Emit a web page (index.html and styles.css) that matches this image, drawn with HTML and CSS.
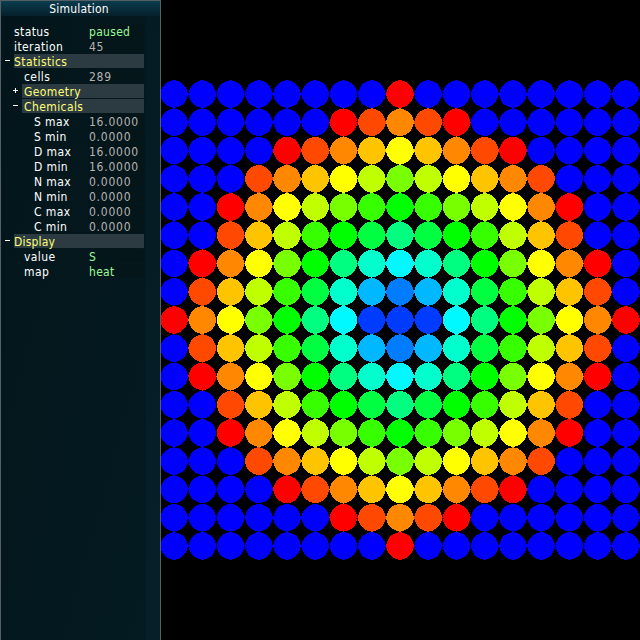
FILE: index.html
```
<!DOCTYPE html>
<html lang="en">
<head>
<meta charset="utf-8">
<title>Simulation</title>
<link rel="stylesheet" href="styles.css">
</head>
<body>
<main class="app">
  <aside class="panel">
    <h1 class="title">Simulation</h1>
    <div class="rows">
      <div class="row"><span class="name">status</span><span class="value live">paused</span></div>
      <div class="row"><span class="name">iteration</span><span class="value">45</span></div>
      <div class="row group"><i class="sign minus"></i><span class="head">Statistics</span></div>
      <div class="row l1"><span class="name">cells</span><span class="value">289</span></div>
      <div class="row group l1"><i class="sign plus"></i><span class="head">Geometry</span></div>
      <div class="row group l1"><i class="sign minus"></i><span class="head">Chemicals</span></div>
      <div class="row l2"><span class="name">S max</span><span class="value">16.0000</span></div>
      <div class="row l2"><span class="name">S min</span><span class="value">0.0000</span></div>
      <div class="row l2"><span class="name">D max</span><span class="value">16.0000</span></div>
      <div class="row l2"><span class="name">D min</span><span class="value">16.0000</span></div>
      <div class="row l2"><span class="name">N max</span><span class="value">0.0000</span></div>
      <div class="row l2"><span class="name">N min</span><span class="value">0.0000</span></div>
      <div class="row l2"><span class="name">C max</span><span class="value">0.0000</span></div>
      <div class="row l2"><span class="name">C min</span><span class="value">0.0000</span></div>
      <div class="row group"><i class="sign minus"></i><span class="head tight">Display</span></div>
      <div class="row l1"><span class="name">value</span><span class="value live">S</span></div>
      <div class="row l1"><span class="name">map</span><span class="value live">heat</span></div>
    </div>
  </aside>
  <svg class="field" id="field" width="479" height="640" viewBox="161 0 479 640"></svg>
</main>
<script src="field.js"></script>
</body>
</html>
```

FILE: styles.css
```
* { box-sizing: border-box; }
body { margin: 0; background: #000; overflow: hidden; }
.app { display: flex; width: 640px; height: 640px; }
.panel {
  flex: none;
  width: 161px;
  height: 640px;
  border: 1px solid #566064;
  border-bottom: 0;
  background:
    linear-gradient(#051b23, #061f29) right / 14px 100% no-repeat,
    linear-gradient(105deg, #03151a, #041b22);
  font: 12px/17px "DejaVu Sans Condensed", "DejaVu Sans", sans-serif;
  color: #fff;
}
.title {
  margin: 0;
  height: 15px;
  padding-right: 3px;
  font-size: 12px;
  font-weight: normal;
  line-height: 16px;
  letter-spacing: 0.2px;
  text-align: center;
  background: linear-gradient(#0b3c4e, #05202b);
}
.rows { padding: 8px 16px 0 13px; }
.row { position: relative; display: flex; height: 15px; white-space: pre; }
.name { flex: 1; letter-spacing: 0.4px; }
.value {
  width: 56px;
  height: 14px;
  padding-left: 1px;
  color: #b4b4b4;
  background: #05161b;
  letter-spacing: 0.75px;
}
.live { color: #98fb98; letter-spacing: 0.3px; }
.l1 .name { padding-left: 10px; }
.l2 .name { padding-left: 20px; }
.group.l1 { margin-left: 8px; }
.head { flex: 1; height: 14px; background: #2c3b41; color: #ffff78; letter-spacing: 0.4px; }
.tight { letter-spacing: 0.2px; }
.l1 .head { padding-left: 2px; }
.sign { position: absolute; left: -9px; top: 6px; width: 5px; height: 1px; background: #fff; }
.plus::after { content: ""; position: absolute; left: 2px; top: -2px; width: 1px; height: 5px; background: #fff; }
.field { display: block; flex: none; background: #000; shape-rendering: crispEdges; }
```

FILE: field.js
```
const COLORS = {
  A: '#ff0000', B: '#ff4800', C: '#ff8800', D: '#ffc400', E: '#ffff00',
  F: '#c0ff00', G: '#78ff00', H: '#38ff00', I: '#00ff00', J: '#00ff40',
  K: '#00ff80', L: '#00ffcc', M: '#00f8ff', N: '#00b8ff', O: '#007cff',
  P: '#003cff', Z: '#0000ff'
};
// One quadrant of the symmetric field, from the centre outwards.
const QUADRANT = [
  'PPMKIGECA',
  'ONLJHFDBZ',
  'MLKIGECAZ',
  'KJIHFDBZZ',
  'IHGFECAZZ',
  'GFEDCBZZZ',
  'EDCBAZZZZ',
  'CBAZZZZZZ',
  'AZZZZZZZZ'
];
// Cells are near-round polygons with slightly pointed extremes on both axes.
const PITCH = 28.24, RADIUS = 13.55, TIP = 14.1, SIDES = 20;
const field = document.getElementById('field');
for (let j = -8; j <= 8; j++) {
  for (let i = -8; i <= 8; i++) {
    const points = [];
    for (let k = 0; k < SIDES; k++) {
      const a = 2 * Math.PI * k / SIDES;
      const r = k % (SIDES / 4) === 0 ? TIP : RADIUS;
      points.push((400 + i * PITCH + r * Math.cos(a)).toFixed(2) + ',' +
        (320 + j * PITCH + r * Math.sin(a)).toFixed(2));
    }
    const cell = document.createElementNS('http://www.w3.org/2000/svg', 'polygon');
    cell.setAttribute('points', points.join(' '));
    cell.setAttribute('fill', COLORS[QUADRANT[Math.abs(j)][Math.abs(i)]]);
    field.appendChild(cell);
  }
}
```
